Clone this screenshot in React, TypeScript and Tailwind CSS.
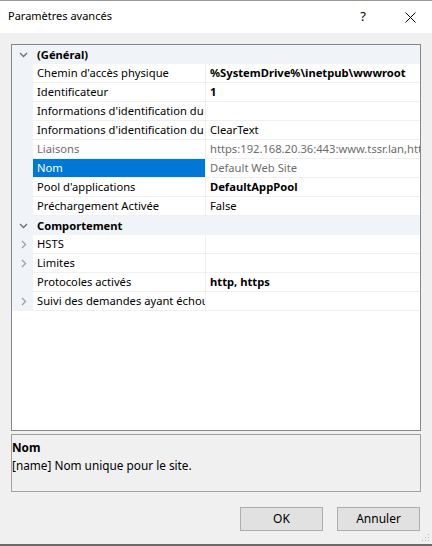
import React from "react";

type Row =
  | { kind: "cat"; label: string }
  | {
      kind: "prop";
      label: string;
      value?: string;
      bold?: boolean;
      muted?: boolean;
      expandable?: boolean;
      selected?: boolean;
    };

// libellés tels qu'affichés (tronqués par la colonne dans la grille d'origine)
const rows: Row[] = [
  { kind: "cat", label: "(Général)" },
  { kind: "prop", label: "Chemin d'accès physique", value: "%SystemDrive%\\inetpub\\wwwroot", bold: true },
  { kind: "prop", label: "Identificateur", value: "1", bold: true },
  { kind: "prop", label: "Informations d'identification du" },
  { kind: "prop", label: "Informations d'identification du", value: "ClearText" },
  { kind: "prop", label: "Liaisons", value: "https:192.168.20.36:443:www.tssr.lan,htt", muted: true },
  { kind: "prop", label: "Nom", value: "Default Web Site", selected: true },
  { kind: "prop", label: "Pool d'applications", value: "DefaultAppPool", bold: true },
  { kind: "prop", label: "Préchargement Activée", value: "False" },
  { kind: "cat", label: "Comportement" },
  { kind: "prop", label: "HSTS", expandable: true },
  { kind: "prop", label: "Limites", expandable: true },
  { kind: "prop", label: "Protocoles activés", value: "http, https", bold: true },
  { kind: "prop", label: "Suivi des demandes ayant échou", expandable: true },
];

const ChevronDown = () => (
  <svg width="9" height="6" viewBox="0 0 9 6" className="block">
    <path d="M1 1 L4.5 4.5 L8 1" fill="none" stroke="#6d6d6d" strokeWidth="1.3" />
  </svg>
);

const ChevronRight = () => (
  <svg width="6" height="9" viewBox="0 0 6 9" className="block">
    <path d="M1 1 L4.5 4.5 L1 8" fill="none" stroke="#a0a0a0" strokeWidth="1.3" />
  </svg>
);

function GridRow({ row }: { row: Row }) {
  if (row.kind === "cat") {
    return (
      <div className="flex h-[19px] items-center bg-[#f0f3f7] pt-px">
        <div className="flex w-[21px] shrink-0 justify-center pl-[1px]">
          <ChevronDown />
        </div>
        <div className="pl-[4px] font-bold">{row.label}</div>
      </div>
    );
  }
  return (
    <div className="flex h-[19px]">
      <div className="flex w-[21px] shrink-0 items-center justify-center bg-[#f0f3f7] pl-[2px]">
        {row.expandable && <ChevronRight />}
      </div>
      <div
        className={
          "flex w-[173px] shrink-0 items-center overflow-hidden whitespace-nowrap border-b border-r border-[#f0f0f0] pl-[4px] pt-px " +
          (row.selected ? "bg-[#0078d7] text-white" : row.muted ? "text-[#6d6d6d]" : "text-black")
        }
      >
        {row.label}
      </div>
      <div
        className={
          "flex min-w-0 flex-1 items-center overflow-hidden whitespace-nowrap border-b border-[#f0f0f0] pl-[4px] pt-px " +
          (row.bold ? "font-bold " : "") +
          (row.muted || row.selected ? "text-[#6d6d6d]" : "text-black")
        }
      >
        {row.value}
      </div>
    </div>
  );
}

export default function App() {
  return (
    <div
      className="relative flex h-[546px] w-[432px] flex-col border-t border-[#9a9a9a] bg-[#f0f0f0] text-[12px] text-black"
      style={{ fontFamily: '"Segoe UI", "Noto Sans", sans-serif' }}
    >
      {/* barre de titre */}
      <div className="flex h-[32px] shrink-0 items-center bg-white pl-[8px]">
        <div className="flex-1 pb-[1px] text-[11px]">Paramètres avancés</div>
        <div className="w-[46px] text-center text-[13px]">?</div>
        <div className="flex w-[46px] items-center justify-center pl-[2px]">
          <svg width="11" height="11" viewBox="0 0 11 11">
            <path d="M0.5 0.5 L10.5 10.5 M10.5 0.5 L0.5 10.5" stroke="#000" strokeWidth="1" />
          </svg>
        </div>
      </div>

      <div className="flex flex-1 flex-col px-[11px] pt-[11px]">
        {/* grille de propriétés */}
        <div className="h-[387px] overflow-hidden border border-[#828790] bg-white text-[11.2px]">
          {rows.map((r, i) => (
            <GridRow key={i} row={r} />
          ))}
        </div>

        {/* description */}
        <div className="mt-[3px] h-[58px] border border-[#a0a0a0] px-0 pt-[3px] text-[11.8px] leading-[18px]">
          <div className="font-bold">Nom</div>
          <div>[name] Nom unique pour le site.</div>
        </div>

        {/* boutons */}
        <div className="mt-[15px] flex justify-end gap-[14px] pr-[1px]">
          <button className="h-[24px] w-[83px] border border-[#adadad] bg-[#e1e1e1]">OK</button>
          <button className="h-[24px] w-[83px] border border-[#adadad] bg-[#e1e1e1]">Annuler</button>
        </div>
      </div>

      {/* poignée de redimensionnement */}
      <svg width="8" height="8" viewBox="0 0 8 8" className="absolute bottom-[4px] right-[2px]">
        <rect x="6" y="0" width="1" height="1" fill="#b8b8b8" />
        <rect x="3" y="3" width="1" height="1" fill="#b8b8b8" />
        <rect x="6" y="3" width="1" height="1" fill="#b8b8b8" />
        <rect x="0" y="6" width="1" height="1" fill="#b8b8b8" />
        <rect x="3" y="6" width="1" height="1" fill="#b8b8b8" />
        <rect x="6" y="6" width="1" height="1" fill="#b8b8b8" />
      </svg>
      <div className="h-[2px] shrink-0 bg-[#6a6a6a]" />
    </div>
  );
}
